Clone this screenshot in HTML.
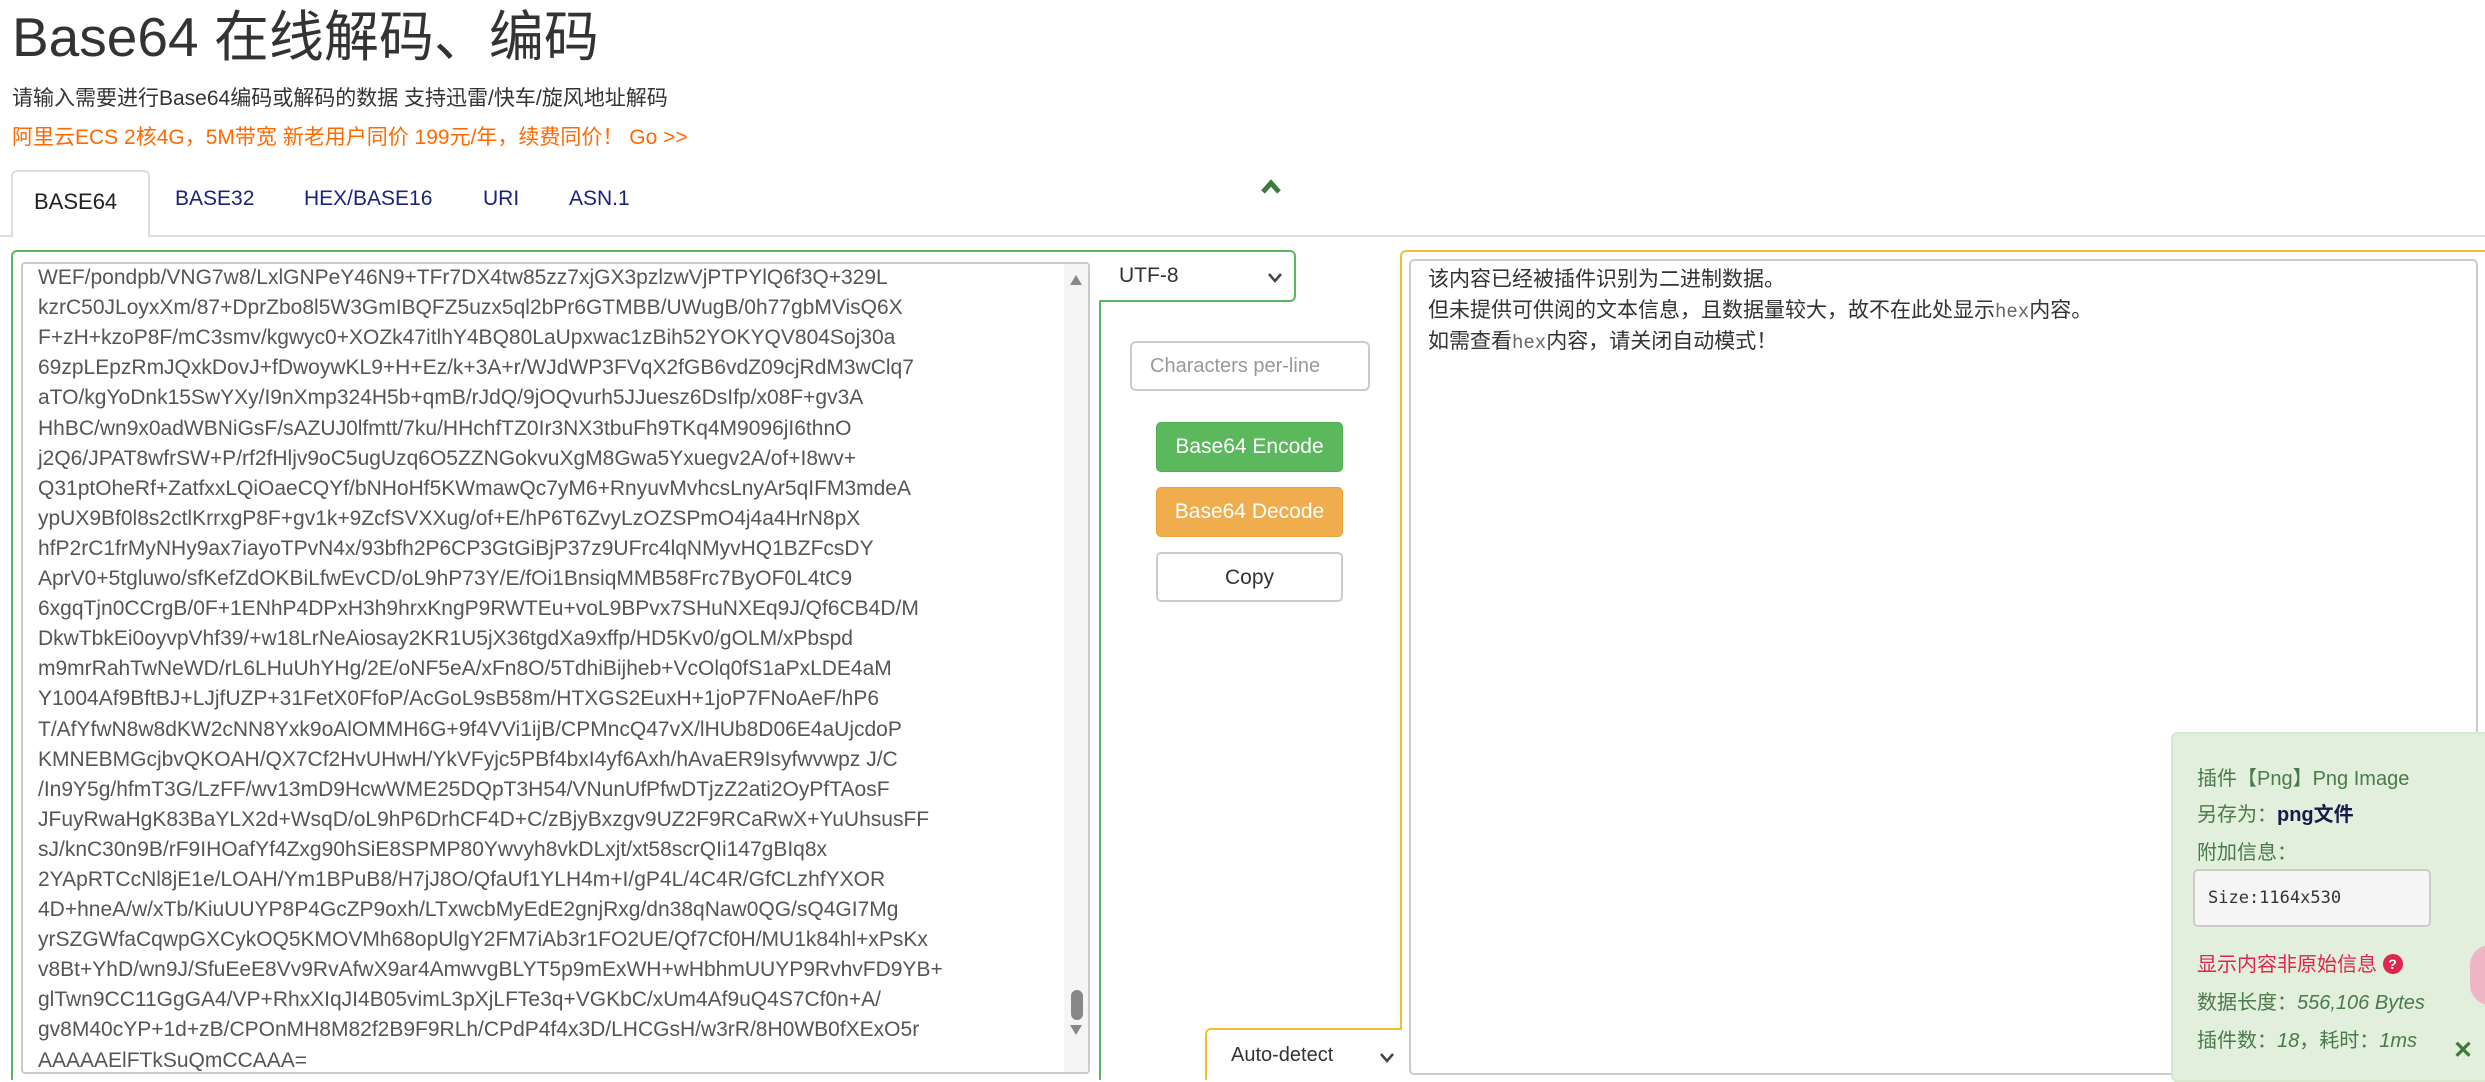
<!DOCTYPE html>
<html><head><meta charset="utf-8">
<style>
*{box-sizing:border-box;margin:0;padding:0}
body{width:2485px;height:1077px;overflow:hidden;background:#fff;font-family:"Liberation Sans","Noto Sans CJK SC",sans-serif;color:#333;position:relative}
.abs{position:absolute}
h1{position:absolute;left:12px;top:4px;font-size:55px;font-weight:normal;color:#333;line-height:66px;white-space:nowrap}
.sub{left:12px;top:82px;font-size:21px;color:#333;white-space:nowrap}
.ad{left:12px;top:121px;font-size:21px;color:#ff6a00;white-space:nowrap}
.tabline{left:0;top:235px;width:2485px;height:2px;background:#ddd}
.tabact{left:11px;top:170px;width:139px;height:67px;border:2px solid #ddd;border-bottom:none;border-radius:6px 6px 0 0;background:#fff}
.tab{top:187px;font-size:21px;color:#1a237e;white-space:nowrap}
.lp{left:11px;top:250px;width:1090px;height:830px;border:2px solid #5cb85c;border-right:none;border-bottom:none;border-radius:6px 0 0 0}
.ta{left:21px;top:262px;width:1069px;height:812px;border:2px solid #ccc;border-radius:4px;overflow:hidden;background:#fff}
.txt{position:absolute;left:15px;top:-31px;font-size:21px;line-height:30.1px;color:#555;white-space:pre;font-family:"Liberation Sans",sans-serif}
.sb{right:0;top:0;width:24px;height:100%;background:#f5f5f5}
.sel1{left:1099px;top:250px;width:197px;height:52px;border:2px solid #5cb85c;border-left:none;border-radius:0 6px 6px 0;background:#fff}
.vline{left:1099px;top:300px;width:2px;height:780px;background:#5cb85c}
.inp{left:1130px;top:341px;width:240px;height:50px;border:2px solid #ccc;border-radius:6px;font-size:20px;color:#999;padding:12px 0 0 18px}
.btn{left:1156px;width:187px;height:50px;border-radius:5px;color:#fff;font-size:21px;text-align:center;line-height:48px}
.rp{left:1400px;top:250px;width:1090px;height:830px;border:2px solid #f0c030;border-right:none;border-bottom:none;border-radius:6px 0 0 0}
.rta{left:1409px;top:259px;width:1069px;height:816px;border:2px solid #ccc;border-radius:5px;background:#fff}
.rtxt{left:1428px;top:265px;font-size:21px;line-height:30.5px;color:#333;white-space:nowrap}
.mono{font-family:"Liberation Mono",monospace;color:#666;font-size:19px}
.sel2{left:1205px;top:1028px;width:197px;height:52px;border:2px solid #f0c030;border-right:none;border-bottom:none;border-radius:6px 0 0 0;background:#fff;font-size:20px;padding:14px 0 0 24px;color:#333}
.pop{left:2171px;top:732px;width:320px;height:350px;background:#e1efdc;border:2px solid #d6e9cf;border-radius:6px}
.pt{left:2197px;font-size:20px;color:#4a7a4a;white-space:nowrap}
</style></head><body>
<h1>Base64 在线解码、编码</h1>
<div class="abs sub">请输入需要进行Base64编码或解码的数据 支持迅雷/快车/旋风地址解码</div>
<div class="abs ad">阿里云ECS 2核4G，5M带宽 新老用户同价 199元/年，续费同价！ Go &gt;&gt;</div>
<div class="abs tabline"></div>
<div class="abs tabact"></div>
<div class="abs tab" style="left:34px;top:189px;color:#222;font-size:22px">BASE64</div>
<div class="abs tab" style="left:175px">BASE32</div>
<div class="abs tab" style="left:304px">HEX/BASE16</div>
<div class="abs tab" style="left:483px">URI</div>
<div class="abs tab" style="left:569px">ASN.1</div>
<svg class="abs" style="left:1260px;top:178px" width="22" height="18" viewBox="0 0 22 18"><path d="M3 14 L11 5 L19 14" stroke="#3e7a3a" stroke-width="5" fill="none"/></svg>

<div class="abs lp"></div>
<div class="abs ta"><div class="txt">cxU2J3i+N0mXEipF5M2Qy7eJx0Yb0rSwqLz5ZbUpA4Xw6m8Ee9pT2dXyG
WEF/pondpb/VNG7w8/LxlGNPeY46N9+TFr7DX4tw85zz7xjGX3pzlzwVjPTPYlQ6f3Q+329L
kzrC50JLoyxXm/87+DprZbo8l5W3GmIBQFZ5uzx5ql2bPr6GTMBB/UWugB/0h77gbMVisQ6X
F+zH+kzoP8F/mC3smv/kgwyc0+XOZk47itlhY4BQ80LaUpxwac1zBih52YOKYQV804Soj30a
69zpLEpzRmJQxkDovJ+fDwoywKL9+H+Ez/k+3A+r/WJdWP3FVqX2fGB6vdZ09cjRdM3wClq7
aTO/kgYoDnk15SwYXy/I9nXmp324H5b+qmB/rJdQ/9jOQvurh5JJuesz6DsIfp/x08F+gv3A
HhBC/wn9x0adWBNiGsF/sAZUJ0lfmtt/7ku/HHchfTZ0Ir3NX3tbuFh9TKq4M9096jI6thnO
j2Q6/JPAT8wfrSW+P/rf2fHljv9oC5ugUzq6O5ZZNGokvuXgM8Gwa5Yxuegv2A/of+I8wv+
Q31ptOheRf+ZatfxxLQiOaeCQYf/bNHoHf5KWmawQc7yM6+RnyuvMvhcsLnyAr5qIFM3mdeA
ypUX9Bf0l8s2ctlKrrxgP8F+gv1k+9ZcfSVXXug/of+E/hP6T6ZvyLzOZSPmO4j4a4HrN8pX
hfP2rC1frMyNHy9ax7iayoTPvN4x/93bfh2P6CP3GtGiBjP37z9UFrc4lqNMyvHQ1BZFcsDY
AprV0+5tgluwo/sfKefZdOKBiLfwEvCD/oL9hP73Y/E/fOi1BnsiqMMB58Frc7ByOF0L4tC9
6xgqTjn0CCrgB/0F+1ENhP4DPxH3h9hrxKngP9RWTEu+voL9BPvx7SHuNXEq9J/Qf6CB4D/M
DkwTbkEi0oyvpVhf39/+w18LrNeAiosay2KR1U5jX36tgdXa9xffp/HD5Kv0/gOLM/xPbspd
m9mrRahTwNeWD/rL6LHuUhYHg/2E/oNF5eA/xFn8O/5TdhiBijheb+VcOlq0fS1aPxLDE4aM
Y1004Af9BftBJ+LJjfUZP+31FetX0FfoP/AcGoL9sB58m/HTXGS2EuxH+1joP7FNoAeF/hP6
T/AfYfwN8w8dKW2cNN8Yxk9oAlOMMH6G+9f4VVi1ijB/CPMncQ47vX/lHUb8D06E4aUjcdoP
KMNEBMGcjbvQKOAH/QX7Cf2HvUHwH/YkVFyjc5PBf4bxI4yf6Axh/hAvaER9Isyfwvwpz J/C
/In9Y5g/hfmT3G/LzFF/wv13mD9HcwWME25DQpT3H54/VNunUfPfwDTjzZ2ati2OyPfTAosF
JFuyRwaHgK83BaYLX2d+WsqD/oL9hP6DrhCF4D+C/zBjyBxzgv9UZ2F9RCaRwX+YuUhsusFF
sJ/knC30n9B/rF9IHOafYf4Zxg90hSiE8SPMP80Ywvyh8vkDLxjt/xt58scrQIi147gBIq8x
2YApRTCcNl8jE1e/LOAH/Ym1BPuB8/H7jJ8O/QfaUf1YLH4m+I/gP4L/4C4R/GfCLzhfYXOR
4D+hneA/w/xTb/KiuUUYP8P4GcZP9oxh/LTxwcbMyEdE2gnjRxg/dn38qNaw0QG/sQ4GI7Mg
yrSZGWfaCqwpGXCykOQ5KMOVMh68opUlgY2FM7iAb3r1FO2UE/Qf7Cf0H/MU1k84hl+xPsKx
v8Bt+YhD/wn9J/SfuEeE8Vv9RvAfwX9ar4AmwvgBLYT5p9mExWH+wHbhmUUYP9RvhvFD9YB+
glTwn9CC11GgGA4/VP+RhxXIqJI4B05vimL3pXjLFTe3q+VGKbC/xUm4Af9uQ4S7Cf0n+A/
gv8M40cYP+1d+zB/CPOnMH8M82f2B9F9RLh/CPdP4f4x3D/LHCGsH/w3rR/8H0WB0fXExO5r
AAAAAElFTkSuQmCCAAA=</div>
<div class="abs sb"></div>
<svg class="abs" style="left:1046px;top:10px" width="14" height="12"><path d="M1 11 L7 1 L13 11Z" fill="#888"/></svg>
<div class="abs" style="left:1048px;top:726px;width:12px;height:30px;background:#888;border-radius:6px"></div>
<svg class="abs" style="left:1046px;top:760px" width="14" height="12"><path d="M1 1 L7 11 L13 1Z" fill="#888"/></svg>
</div>
<div class="abs sel1"><span class="abs" style="left:20px;top:12px;font-size:21px;color:#333">UTF-8</span><svg class="abs" style="left:168px;top:20px" width="16" height="12"><path d="M2 2 L8 9 L14 2" stroke="#444" stroke-width="2.5" fill="none"/></svg></div>
<div class="abs vline"></div>
<div class="abs inp">Characters per-line</div>
<div class="abs btn" style="top:422px;background:#5cb85c;border:1px solid #4cae4c">Base64 Encode</div>
<div class="abs btn" style="top:487px;background:#f0ad4e;border:1px solid #eea236">Base64 Decode</div>
<div class="abs btn" style="top:552px;background:#fff;border:2px solid #ccc;color:#333">Copy</div>

<div class="abs rp"></div>
<div class="abs rta"></div>
<div class="abs rtxt">该内容已经被插件识别为二进制数据。<br>但未提供可供阅的文本信息，且数据量较大，故不在此处显示<span class="mono">hex</span>内容。<br>如需查看<span class="mono">hex</span>内容，请关闭自动模式！</div>
<div class="abs sel2">Auto-detect<svg class="abs" style="left:172px;top:22px" width="16" height="12"><path d="M2 2 L8 9 L14 2" stroke="#444" stroke-width="2.5" fill="none"/></svg></div>

<div class="abs pop"></div>
<div class="abs pt" style="top:762px">插件【Png】Png Image</div>
<div class="abs pt" style="top:798px">另存为：<b style="color:#1a1a4a">png文件</b></div>
<div class="abs pt" style="top:836px">附加信息：</div>
<div class="abs" style="left:2193px;top:869px;width:238px;height:58px;background:#f5f5f5;border:2px solid #ccc;border-radius:5px;font-family:'DejaVu Sans Mono',monospace;font-size:17px;color:#333;padding:17px 0 0 13px">Size:1164x530</div>
<div class="abs pt" style="top:948px;color:#e0264f">显示内容非原始信息 <span style="display:inline-block;width:20px;height:20px;border-radius:10px;background:#e0264f;color:#fff;font-size:14px;text-align:center;line-height:20px;font-weight:bold;vertical-align:2px">?</span></div>
<div class="abs pt" style="top:986px">数据长度：<i>556,106 Bytes</i></div>
<div class="abs pt" style="top:1024px">插件数：<i>18</i>，耗时：<i>1ms</i></div>
<div class="abs" style="left:2453px;top:1036px;font-size:24px;font-weight:bold;color:#3e7a3a">✕</div>
<div class="abs" style="left:2470px;top:945px;width:40px;height:60px;border-radius:30px;background:#f0b5c5"></div>
</body></html>
